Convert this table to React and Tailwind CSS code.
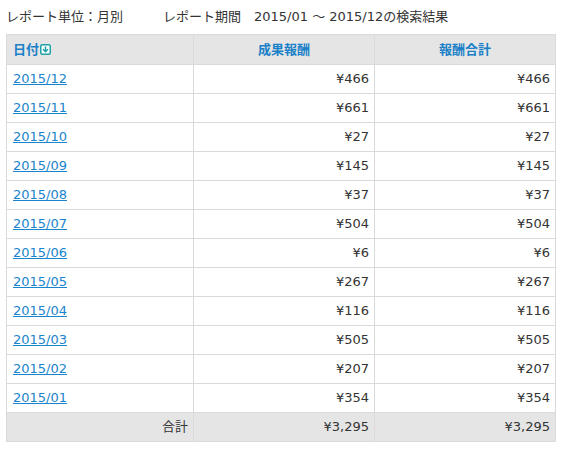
import React from "react";

const rows = [
  ["2015/12", "¥466"],
  ["2015/11", "¥661"],
  ["2015/10", "¥27"],
  ["2015/09", "¥145"],
  ["2015/08", "¥37"],
  ["2015/07", "¥504"],
  ["2015/06", "¥6"],
  ["2015/05", "¥267"],
  ["2015/04", "¥116"],
  ["2015/03", "¥505"],
  ["2015/02", "¥207"],
  ["2015/01", "¥354"],
];

function SortIcon() {
  return (
    <svg width="11" height="11" viewBox="0 0 11 11" className="inline-block ml-[1px] align-[-1px]">
      <rect x="0.75" y="0.75" width="9.5" height="9.5" rx="1.5" fill="#fff" stroke="#1fa3a8" strokeWidth="1.5" />
      <path d="M5.5 2.5v4.5" stroke="#1fa3a8" strokeWidth="1.6" />
      <path d="M3 5.2L5.5 7.7 8 5.2" stroke="#1fa3a8" strokeWidth="1.5" fill="none" />
    </svg>
  );
}

export default function App() {
  return (
    <div
      className="w-[562px] h-[453px] bg-white text-[13px] text-[#333] px-[6px]"
      style={{ fontFamily: '"DejaVu Sans", "Noto Sans CJK JP", sans-serif' }}
    >
      <div className="h-[34px] flex items-center gap-[40px] pb-[1px]">
        <span>レポート単位：月別</span>
        <span>レポート期間　2015/01 ～ 2015/12の検索結果</span>
      </div>
      <table className="w-[550px] table-fixed border-separate border-spacing-0 border-l border-t border-[#dadada]">
        <colgroup>
          <col className="w-[187px]" />
          <col className="w-[181px]" />
          <col className="w-[181px]" />
        </colgroup>
        <thead>
          <tr className="bg-[#e5e5e5] text-[#1a80c8] font-bold">
            <th className="h-[30px] px-[6px] text-left border-r border-b border-[#dadada]">
              <span>日付</span>
              <SortIcon />
            </th>
            <th className="h-[30px] text-center border-r border-b border-[#dadada]">成果報酬</th>
            <th className="h-[30px] text-center border-r border-b border-[#dadada]">報酬合計</th>
          </tr>
        </thead>
        <tbody>
          {rows.map(([d, v]) => (
            <tr key={d}>
              <td className="h-[29px] px-[6px] border-r border-b border-[#dadada]">
                <a href="#" className="text-[#1a84cc] underline">{d}</a>
              </td>
              <td className="h-[29px] px-[5px] text-right border-r border-b border-[#dadada]">{v}</td>
              <td className="h-[29px] px-[5px] text-right border-r border-b border-[#dadada]">{v}</td>
            </tr>
          ))}
          <tr className="bg-[#e5e5e5]">
            <td className="h-[29px] px-[5px] text-right border-r border-b border-[#dadada]">合計</td>
            <td className="h-[29px] px-[5px] text-right border-r border-b border-[#dadada]">¥3,295</td>
            <td className="h-[29px] px-[5px] text-right border-r border-b border-[#dadada]">¥3,295</td>
          </tr>
        </tbody>
      </table>
    </div>
  );
}
